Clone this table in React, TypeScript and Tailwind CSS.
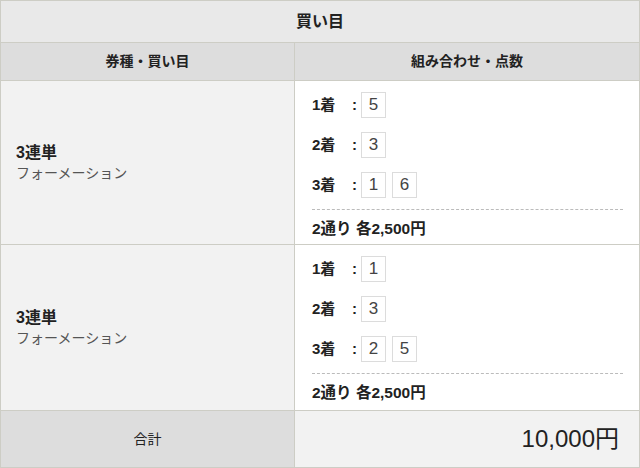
const font = { fontFamily: '"Liberation Sans", "Noto Sans CJK JP", sans-serif' };

type Bet = {
  picks: { label: string; nums: string[] }[];
  summary: string;
};

const bets: Bet[] = [
  {
    picks: [
      { label: "1着", nums: ["5"] },
      { label: "2着", nums: ["3"] },
      { label: "3着", nums: ["1", "6"] },
    ],
    summary: "2通り 各2,500円",
  },
  {
    picks: [
      { label: "1着", nums: ["1"] },
      { label: "2着", nums: ["3"] },
      { label: "3着", nums: ["2", "5"] },
    ],
    summary: "2通り 各2,500円",
  },
];

const BetRow = ({ bet, height }: { bet: Bet; height: string }) => (
  <div className={`flex border-b border-[#cdcdc5] ${height}`}>
    <div className="w-[294px] shrink-0 bg-[#f2f2f2] border-r border-[#cdcdc5] flex flex-col justify-center pl-[15px]">
      <p className="text-[16px] leading-[20px] font-bold text-[#222]">3連単</p>
      <p className="text-[14px] leading-[20px] text-[#555]">フォーメーション</p>
    </div>
    <div className="flex-1 bg-white pl-[17px] pr-[16px] pt-[11px]">
      <div className="flex flex-col gap-[14px]">
        {bet.picks.map((pick) => (
          <div key={pick.label} className="flex items-center h-[26px]">
            <span className="w-[40px] text-[15px] font-bold text-[#222]">{pick.label}</span>
            <span className="w-[9px] text-[15px] font-bold text-[#222]">:</span>
            <div className="flex gap-[6px]">
              {pick.nums.map((n) => (
                <span
                  key={n}
                  className="w-[25px] h-[26px] border border-[#dcdcdc] flex items-center justify-center text-[17px] text-[#444]"
                >
                  {n}
                </span>
              ))}
            </div>
          </div>
        ))}
      </div>
      <div className="mt-[11px] border-t border-dashed border-[#bbb]" />
      <p className="pt-[7px] text-[15.5px] font-bold text-[#222]">{bet.summary}</p>
    </div>
  </div>
);

export default function App() {
  return (
    <div style={font} className="w-[640px] h-[468px] border border-[#cdcdc5] bg-white flex flex-col">
      <div className="h-[42px] shrink-0 bg-[#e9e9e9] border-b border-[#cdcdc5] flex items-center justify-center text-[16px] font-bold text-[#222]">
        買い目
      </div>
      <div className="h-[38px] shrink-0 flex bg-[#dddddd] border-b border-[#cdcdc5] text-[14px] font-bold text-[#222]">
        <div className="w-[294px] shrink-0 border-r border-[#cdcdc5] flex items-center justify-center">
          券種・買い目
        </div>
        <div className="flex-1 flex items-center justify-center">組み合わせ・点数</div>
      </div>
      <BetRow bet={bets[0]} height="h-[164px]" />
      <BetRow bet={bets[1]} height="h-[166px]" />
      <div className="flex-1 flex">
        <div className="w-[294px] shrink-0 bg-[#dddddd] border-r border-[#cdcdc5] flex items-center justify-center text-[14px] text-[#222]">
          合計
        </div>
        <div className="flex-1 bg-[#f2f2f2] flex items-center justify-end pr-[20px] text-[24px] text-[#222]">
          10,000円
        </div>
      </div>
    </div>
  );
}
